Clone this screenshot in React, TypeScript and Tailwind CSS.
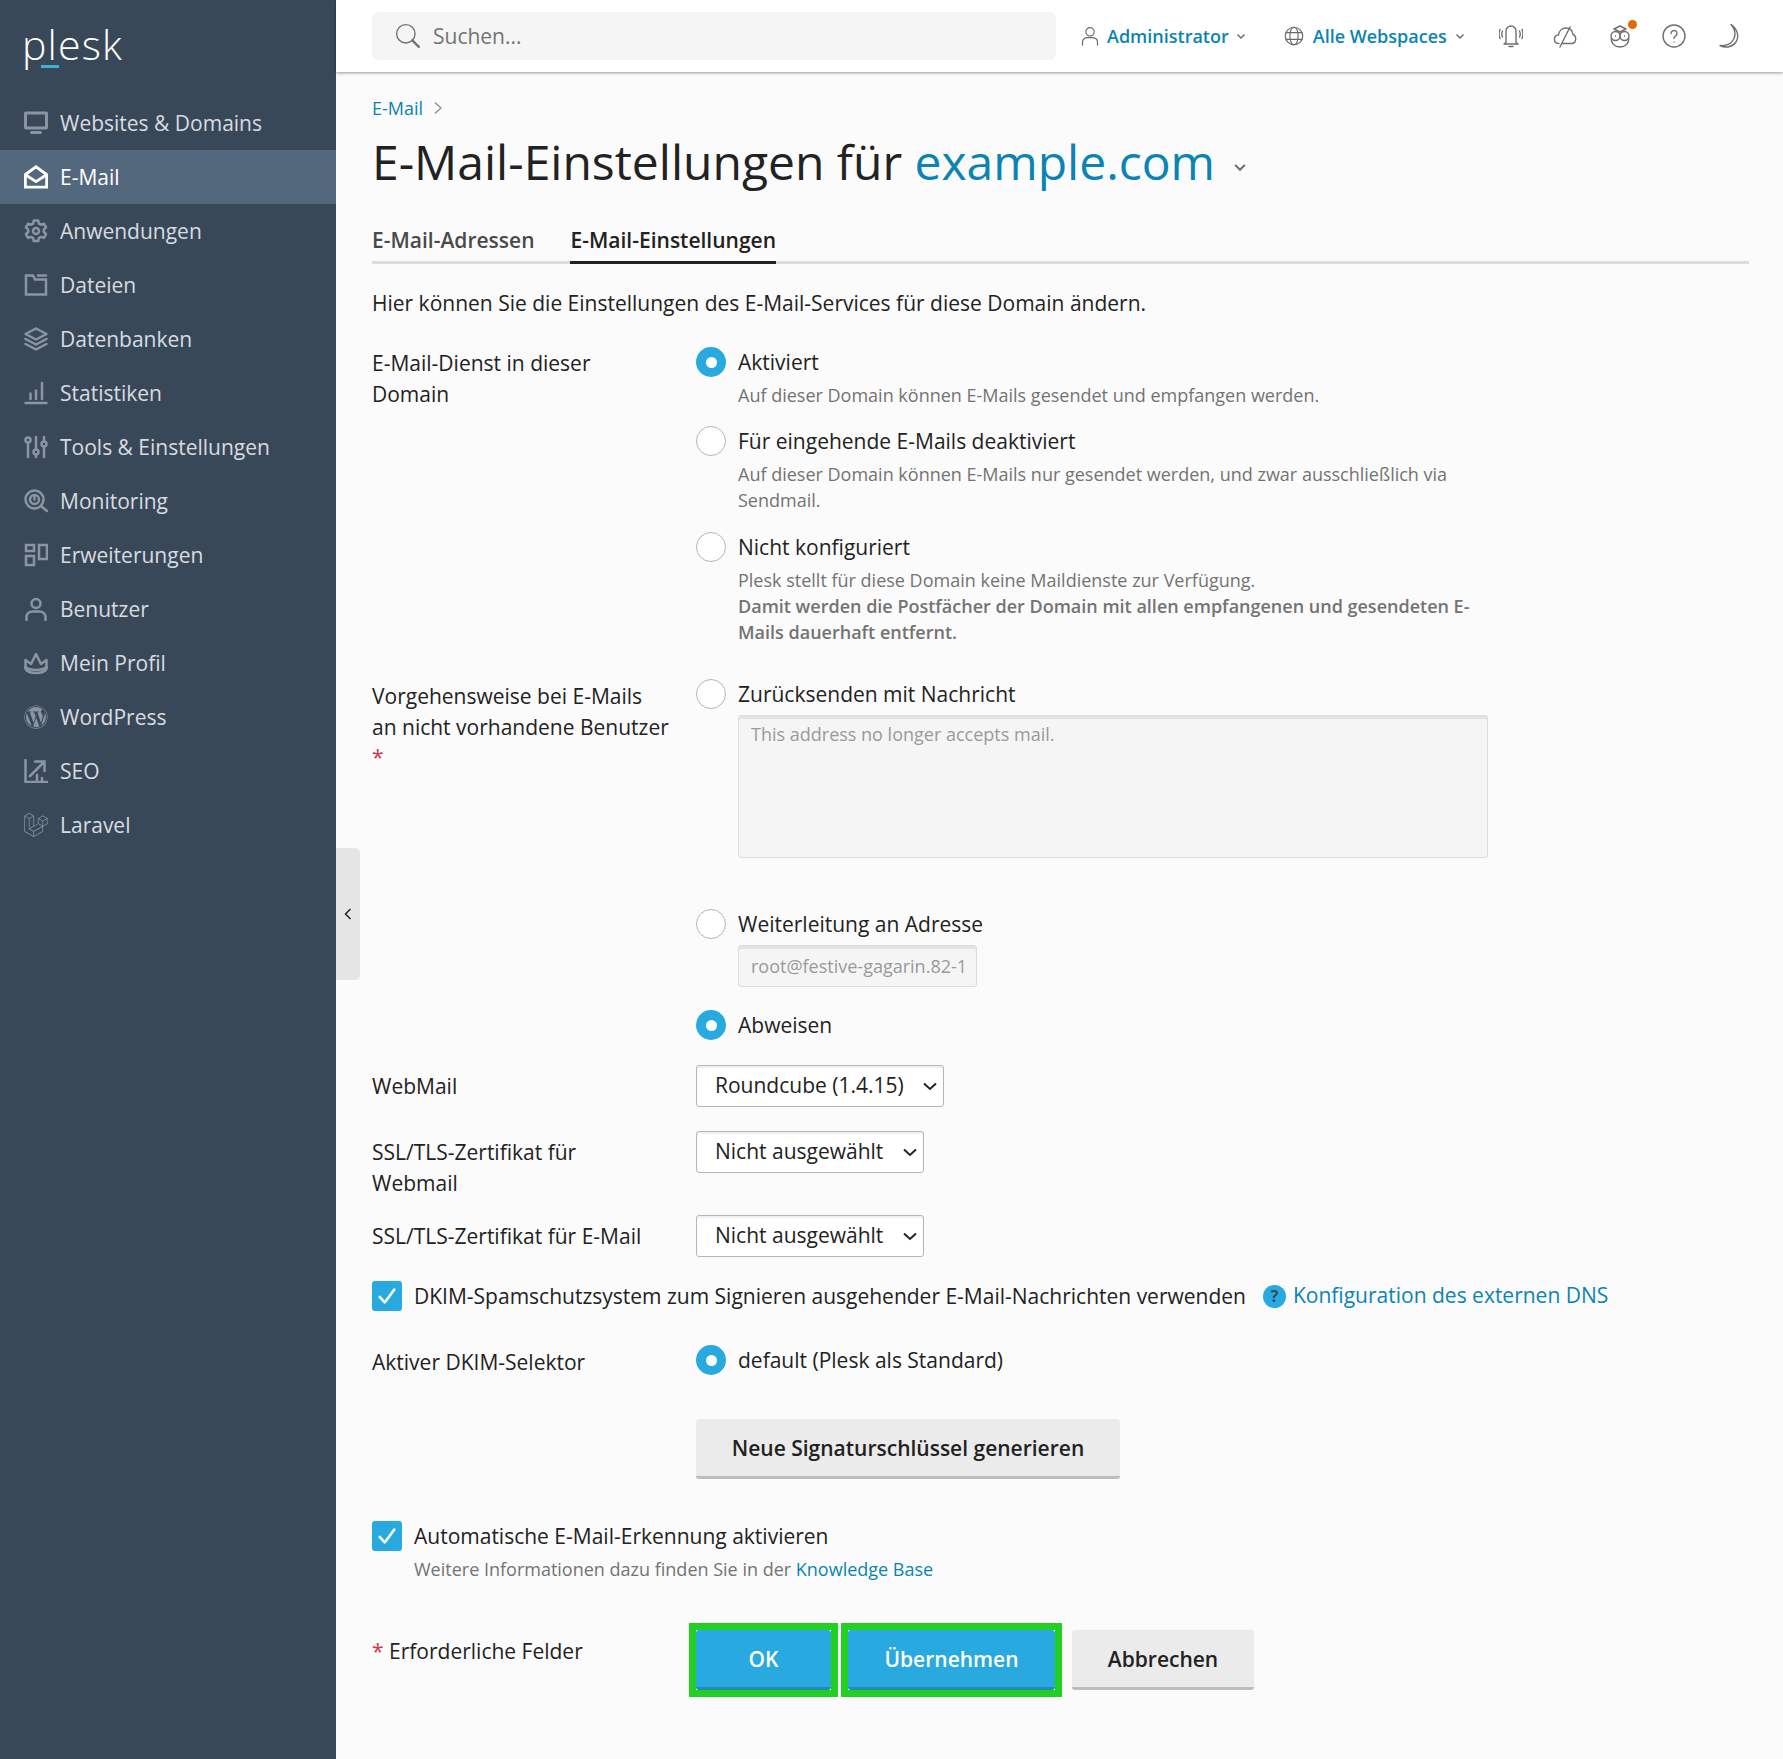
import { ReactNode } from "react";
import { FaWordpress } from "react-icons/fa";
import { SiLaravel } from "react-icons/si";

const Icon = ({ children, size = 24, sw = 2.5 }: { children: ReactNode; size?: number; sw?: number }) => (
  <svg
    width={size}
    height={size}
    viewBox="0 0 24 24"
    fill="none"
    stroke="currentColor"
    strokeWidth={sw}
    strokeLinecap="round"
    strokeLinejoin="round"
    className="shrink-0"
  >
    {children}
  </svg>
);

const navItems: { label: string; active?: boolean; icon: ReactNode }[] = [
  {
    label: "Websites & Domains",
    icon: (
      <Icon sw={3}>
        <rect x="1.5" y="2" width="21" height="15" rx="0.5" strokeLinecap="butt" />
        <path d="M7.5 21.500h9" />
      </Icon>
    ),
  },
  {
    label: "E-Mail",
    active: true,
    icon: (
      <Icon sw={2.8}>
        <path d="M1.400 9.500 12 1.800l10.600 7.700v12.600H1.400z" strokeLinejoin="miter" />
        <path d="M1.800 10l10.200 6.600L22.200 10" />
      </Icon>
    ),
  },
  {
    label: "Anwendungen",
    icon: (
      <Icon>
        <path d="M9.800 1.500h4.400l.7 3.100 2 1.100 3-1 2.200 3.800-2.300 2.100v2.400l2.300 2.100-2.200 3.800-3-1-2 1.100-.7 3.100H9.800l-.7-3.100-2-1.100-3 1-2.200-3.800 2.300-2.100v-2.400L1.900 8.500l2.200-3.800 3 1 2-1.100z" />
        <circle cx="12" cy="12" r="3" />
      </Icon>
    ),
  },
  {
    label: "Dateien",
    icon: (
      <Icon>
        <path d="M2 2.500v19h20V6.500H11l-2-4z" strokeLinejoin="miter" />
        <path d="M14 2.500h8" />
      </Icon>
    ),
  },
  {
    label: "Datenbanken",
    icon: (
      <Icon>
        <path d="M12 1.500 22.500 7 12 12.500 1.500 7z" />
        <path d="M1.500 12 12 17.500 22.500 12" />
        <path d="M1.500 17 12 22.500 22.500 17" />
      </Icon>
    ),
  },
  {
    label: "Statistiken",
    icon: (
      <Icon>
        <path d="M1.500 22h21" />
        <path d="M6.500 12.500v5.500M12 9.500v8.500M18 2v16" />
      </Icon>
    ),
  },
  {
    label: "Tools & Einstellungen",
    icon: (
      <Icon>
        <circle cx="4" cy="5" r="2.500" />
        <circle cx="12" cy="17" r="2.500" />
        <circle cx="20" cy="9" r="2.500" />
        <path d="M4 7.500V22M12 2v12.500M12 19.500V22M20 2v4.500M20 11.500V22" />
      </Icon>
    ),
  },
  {
    label: "Monitoring",
    icon: (
      <Icon>
        <circle cx="10.500" cy="10.500" r="9" />
        <circle cx="10.500" cy="10.500" r="4.500" />
        <path d="M10.500 7v3.500M17 17l6 5" />
      </Icon>
    ),
  },
  {
    label: "Erweiterungen",
    icon: (
      <Icon>
        <rect x="2" y="2" width="8" height="6" strokeLinejoin="miter" />
        <rect x="2" y="13" width="8" height="9" strokeLinejoin="miter" />
        <rect x="15" y="2" width="8" height="14" strokeLinejoin="miter" />
      </Icon>
    ),
  },
  {
    label: "Benutzer",
    icon: (
      <Icon>
        <circle cx="12" cy="6.500" r="4.500" />
        <path d="M2.500 23v-3.500c0-3 3-5 6-5h7c3 0 6 2 6 5V23" />
      </Icon>
    ),
  },
  {
    label: "Mein Profil",
    icon: (
      <Icon>
        <path d="M1.500 9 7 13l5-10 5 10 5.500-4v9c-2 3-6 4-10.500 4s-8.500-1-10.500-4z" />
        <path d="M1.500 16c3 2.500 7 3 10.500 3s7.500-.5 10.500-3" />
      </Icon>
    ),
  },
  { label: "WordPress", icon: <FaWordpress size={24} className="shrink-0" /> },
  {
    label: "SEO",
    icon: (
      <Icon>
        <path d="M1.500 1v22h22" strokeLinejoin="miter" />
        <path d="M6 17 20 3M11 2.500h9.500V12" strokeLinejoin="miter" />
        <path d="M13 22v-6M18 22v-3" />
      </Icon>
    ),
  },
  { label: "Laravel", icon: <SiLaravel size={24} className="shrink-0" /> },
];

const Sidebar = () => (
  <aside className="w-[336px] shrink-0 bg-[#394858]">
    <div className="relative h-[96px] pl-[22px] pt-[14px]">
      <span className="block text-[41px] leading-[60px] font-light tracking-[1.2px] text-white">plesk</span>
      <span className="absolute left-[41px] top-[65px] h-[3px] w-[18px] bg-[#3cb1d6]" />
    </div>
    <nav>
      {navItems.map((item) => (
        <div
          key={item.label}
          className={
            item.active
              ? "flex h-[54px] items-center gap-[12px] bg-[#53687c] pl-[24px] text-white"
              : "flex h-[54px] items-center gap-[12px] pl-[24px] text-[#d8dce0]"
          }
        >
          <span className={item.active ? "text-white" : "text-[#8a95a1]"}>{item.icon}</span>
          <span className="-mt-[1px] text-[21px] leading-[30px]">{item.label}</span>
        </div>
      ))}
    </nav>
  </aside>
);

const Chevron = ({ cls = "" }: { cls?: string }) => (
  <svg width="10" height="10" viewBox="0 0 10 10" fill="none" stroke="currentColor" strokeWidth="1.400" className={cls}>
    <path d="M1.500 3.500 5 7l3.500-3.500" />
  </svg>
);

const Header = () => (
  <header className="flex h-[72px] items-center bg-white pl-[36px] shadow-[0_1px_3px_rgba(0,0,0,0.4)]">
    <div className="flex h-[48px] w-[684px] items-center gap-[12px] rounded-[6px] bg-[#f5f5f5] pl-[23px] text-[#737373]">
      <Icon size={26} sw={1.3}>
        <circle cx="10" cy="10" r="8.500" />
        <path d="M16 16l6 6" strokeWidth="2.200" />
      </Icon>
      <span className="text-[21px] leading-[30px]">Suchen...</span>
    </div>
    <div className="ml-[24px] flex items-center gap-[7px] text-[#6b6b6b]">
      <Icon size={20} sw={1.4}>
        <circle cx="12" cy="7" r="5" />
        <path d="M3 23v-4c0-3 3-5 6-5h6c3 0 6 2 6 5v4" />
      </Icon>
      <span className="text-[18px] leading-[26px] font-semibold text-[#0a84b3]">Administrator</span>
      <Chevron />
    </div>
    <div className="ml-[38px] flex items-center gap-[9px] text-[#6b6b6b]">
      <Icon size={20} sw={1.4}>
        <circle cx="12" cy="12" r="10.500" />
        <ellipse cx="12" cy="12" rx="5" ry="10.500" />
        <path d="M2.500 8h19M2.500 16h19" />
      </Icon>
      <span className="text-[18px] leading-[26px] font-semibold text-[#0a84b3]">Alle Webspaces</span>
      <Chevron cls="-ml-[1px]" />
    </div>
    <div className="ml-[34px] flex items-center gap-[30.500px] text-[#6f6f6f]">
      <Icon sw={1.4}>
        <path d="M7 18.500V7a5 5 0 0 1 10 0v11.500l2 1.500H5z" />
        <path d="M10 22.500h4M3.500 7c-1 2-1 4 0 6M1 5.500c-1.300 3-1.300 6 0 9M20.500 7c1 2 1 4 0 6M23 5.500c1.300 3 1.300 6 0 9" />
      </Icon>
      <Icon sw={1.4}>
        <path d="M6 19.500c-6 0-6-8-.5-8.500C6 7 9 4 13 4c4 0 6.500 3 7 6.500 4 1.500 3.500 9-1.500 9H9" />
        <path d="M7 23 17 3" />
      </Icon>
      <span className="relative block">
        <Icon sw={1.4}>
          <path d="M6 5 12 2l6 3-6 3z" />
          <circle cx="7.500" cy="12" r="4.500" />
          <circle cx="16.500" cy="12" r="4.500" />
          <path d="M3.500 14c-1 5 3 9 8.500 9s9.500-4 8.500-9M7.500 12h.01M16.500 12h.01" />
        </Icon>
        <span className="absolute -top-[4px] -right-[5px] size-[9px] rounded-full bg-[#e06c00]" />
      </span>
      <Icon sw={1.4}>
        <circle cx="12" cy="12" r="11" />
        <path d="M9 9.500a3 3 0 1 1 4.500 2.600c-1 .6-1.500 1.200-1.500 2.400M12 18v.01" />
      </Icon>
      <Icon sw={1.4}>
        <path d="M14 .5c6.500 4.500 8.500 12 5 17.500-3.500 5-10 6.500-16 3.500 6 .5 11-1.500 13.500-6 2.500-5 1.500-10.500-2.500-15z" />
      </Icon>
    </div>
  </header>
);

const Radio = ({ checked }: { checked?: boolean }) =>
  checked ? (
    <span className="flex size-[30px] shrink-0 items-center justify-center rounded-full bg-[#28a9e0]">
      <span className="size-[11px] rounded-full bg-white" />
    </span>
  ) : (
    <span className="size-[30px] shrink-0 rounded-full border border-[#b5b5b5] bg-white" />
  );

const RadioLine = ({ checked, children }: { checked?: boolean; children: ReactNode }) => (
  <div className="flex items-center gap-[12px] text-[21px] leading-[30px] text-[#222222]">
    <Radio checked={checked} />
    <span>{children}</span>
  </div>
);

const Desc = ({ children }: { children: ReactNode }) => (
  <p className="mt-[5px] ml-[42px] w-[750px] text-[18px] leading-[26px] text-[#737373]">{children}</p>
);

const Checkbox = () => (
  <span className="flex size-[30px] shrink-0 items-center justify-center rounded-[3px] bg-[#28a9e0] text-white">
    <Icon size={22} sw={2.8}>
      <path d="M4 13l5.500 6L20 5" />
    </Icon>
  </span>
);

const Label = ({ children, cls = "" }: { children: ReactNode; cls?: string }) => (
  <div className={`w-[324px] shrink-0 text-[21px] leading-[30.600px] text-[#222222] ${cls}`}>{children}</div>
);

const Select = ({ value, cls }: { value: string; cls: string }) => (
  <div className={`relative ${cls}`}>
    <select
      defaultValue={value}
      className="h-[42px] w-full appearance-none rounded-[3px] border border-[#b5b5b5] bg-white pl-[18px] text-[21px] text-[#222222] shadow-[inset_0_2px_1px_rgba(0,0,0,0.06)]"
    >
      <option>{value}</option>
    </select>
    <svg
      width="14"
      height="9"
      viewBox="0 0 14 9"
      fill="none"
      stroke="#222222"
      strokeWidth="2"
      className="pointer-events-none absolute top-[17px] right-[7px]"
    >
      <path d="M1 1.500 7 7l6-5.500" />
    </svg>
  </div>
);

const Button = ({ children, primary, cls = "" }: { children: ReactNode; primary?: boolean; cls?: string }) => (
  <button
    className={
      primary
        ? `h-[60px] rounded-[3px] border-b-[3px] border-[#2289b8] bg-[#28a9e0] pt-[3px] text-[21px] font-semibold whitespace-nowrap text-white ${cls}`
        : `h-[60px] rounded-[3px] border-b-[3px] border-[#bdbdbd] bg-[#ebebeb] pt-[3px] text-[21px] font-semibold whitespace-nowrap text-[#222222] ${cls}`
    }
  >
    {children}
  </button>
);

const Form = () => (
  <div className="mt-[29px]">
    <div className="flex">
      <Label cls="pt-[1px]">
        E-Mail-Dienst in dieser
        <br />
        Domain
      </Label>
      <div>
        <RadioLine checked>Aktiviert</RadioLine>
        <Desc>Auf dieser Domain können E-Mails gesendet und empfangen werden.</Desc>
        <div className="mt-[18px]">
          <RadioLine>Für eingehende E-Mails deaktiviert</RadioLine>
        </div>
        <Desc>Auf dieser Domain können E-Mails nur gesendet werden, und zwar ausschließlich via Sendmail.</Desc>
        <div className="mt-[19px]">
          <RadioLine>Nicht konfiguriert</RadioLine>
        </div>
        <Desc>
          Plesk stellt für diese Domain keine Maildienste zur Verfügung.
          <br />
          <strong className="font-semibold">
            Damit werden die Postfächer der Domain mit allen empfangenen und gesendeten E-Mails dauerhaft entfernt.
          </strong>
        </Desc>
      </div>
    </div>

    <div className="mt-[34px] flex">
      <Label cls="pt-[2px]">
        Vorgehensweise bei E-Mails
        <br />
        an nicht vorhandene Benutzer
        <br />
        <span className="text-[#d0344e]">*</span>
      </Label>
      <div>
        <RadioLine>Zurücksenden mit Nachricht</RadioLine>
        <textarea
          disabled
          defaultValue="This address no longer accepts mail."
          className="mt-[6px] ml-[42px] block h-[143px] w-[750px] resize-none rounded-[3px] border border-[#dddddd] bg-[#f5f5f5] px-[12px] py-[4px] text-[18px] leading-[28px] text-[#9a9a9a] shadow-[inset_0_3px_1px_rgba(0,0,0,0.07)]"
        />
        <div className="mt-[51px]">
          <RadioLine>Weiterleitung an Adresse</RadioLine>
        </div>
        <input
          disabled
          defaultValue="root@festive-gagarin.82-1"
          className="mt-[6px] ml-[42px] block h-[42px] w-[239px] rounded-[3px] border border-[#dddddd] bg-[#f5f5f5] px-[12px] text-[18px] text-[#9a9a9a] shadow-[inset_0_3px_1px_rgba(0,0,0,0.07)]"
        />
        <div className="mt-[23px]">
          <RadioLine checked>Abweisen</RadioLine>
        </div>
      </div>
    </div>

    <div className="mt-[25px] flex">
      <Label cls="pt-[6px]">WebMail</Label>
      <Select value="Roundcube (1.4.15)" cls="w-[248px]" />
    </div>
    <div className="mt-[24px] flex">
      <Label cls="pt-[6px]">
        SSL/TLS-Zertifikat für
        <br />
        Webmail
      </Label>
      <Select value="Nicht ausgewählt" cls="w-[228px]" />
    </div>
    <div className="mt-[17px] flex">
      <Label cls="pt-[6px]">SSL/TLS-Zertifikat für E-Mail</Label>
      <Select value="Nicht ausgewählt" cls="w-[228px]" />
    </div>

    <div className="mt-[24px] flex items-center gap-[12px] text-[21px] leading-[30px] text-[#222222]">
      <Checkbox />
      <span>DKIM-Spamschutzsystem zum Signieren ausgehender E-Mail-Nachrichten verwenden</span>
      <span className="ml-[5px] flex size-[23px] items-center justify-center rounded-full bg-[#28a9e0] text-[16px] font-bold text-[#39455a]">
        ?
      </span>
      <span className="-ml-[5px] -mt-[2px] text-[#0a84b3]">Konfiguration des externen DNS</span>
    </div>

    <div className="mt-[32px] flex">
      <Label cls="pt-[4px]">Aktiver DKIM-Selektor</Label>
      <RadioLine checked>default (Plesk als Standard)</RadioLine>
    </div>

    <div className="mt-[41px] pl-[324px]">
      <Button cls="w-[424px]">Neue Signaturschlüssel generieren</Button>
    </div>

    <div className="mt-[42px] flex items-center gap-[12px] text-[21px] leading-[30px] text-[#222222]">
      <Checkbox />
      <span>Automatische E-Mail-Erkennung aktivieren</span>
    </div>
    <p className="mt-[5px] ml-[42px] text-[18px] leading-[26px] text-[#737373]">
      Weitere Informationen dazu finden Sie in der <span className="text-[#0a84b3]">Knowledge Base</span>
    </p>

    <div className="mt-[48px] flex">
      <Label cls="pt-[6px]">
        <span className="text-[#d0344e]">*</span> Erforderliche Felder
      </Label>
      <div className="flex gap-[17px]">
        <div className="bg-white outline-[7px] outline-[#23cf23]">
          <Button primary cls="block w-[135px]">OK</Button>
        </div>
        <div className="bg-white outline-[7px] outline-[#23cf23]">
          <Button primary cls="block w-[207px]">Übernehmen</Button>
        </div>
        <Button cls="w-[182px]">Abbrechen</Button>
      </div>
    </div>
  </div>
);

export default function App() {
  return (
    <div className="flex min-h-[1759px] font-['Open_Sans',sans-serif]">
      <Sidebar />
      <main className="relative flex-1 bg-[#fbfbfb]">
        <Header />
        <button className="absolute top-[848px] left-0 flex h-[132px] w-[24px] items-center justify-center rounded-r-[5px] bg-[#e5e5e5] text-[#222222]">
          <svg width="10" height="14" viewBox="0 0 10 14" fill="none" stroke="currentColor" strokeWidth="1.500">
            <path d="M7.500 2 2.500 7l5 5" />
          </svg>
        </button>
        <div className="pr-[34px] pl-[36px]">
          <div className="flex items-center gap-[10px] pt-[23px] text-[18px] leading-[26px] text-[#0a84b3]">
            E-Mail
            <svg width="10" height="16" viewBox="0 0 10 16" fill="none" stroke="#8a8a8a" strokeWidth="1.200">
              <path d="M2 2.500 8 8l-6 5.500" />
            </svg>
          </div>
          <h1 className="mt-[9px] flex items-center text-[48px] leading-[64px] text-[#222222]">
            E-Mail-Einstellungen für&nbsp;<span className="text-[#0a84b3]">example.com</span>
            <Chevron cls="mt-[10px] ml-[18px] size-[14px] text-[#6b6b6b]" />
          </h1>
          <div className="mt-[17px] flex h-[53px] gap-[36px] border-b-[3px] border-[#dddddd] text-[21px] font-semibold">
            <div className="pt-[14px] leading-[30px] text-[#4a4a4a]">E-Mail-Adressen</div>
            <div className="-mb-[3px] border-b-[3px] border-[#222222] pt-[14px] leading-[30px] text-[#222222]">
              E-Mail-Einstellungen
            </div>
          </div>
          <p className="mt-[24px] text-[21px] leading-[30px] text-[#222222]">
            Hier können Sie die Einstellungen des E-Mail-Services für diese Domain ändern.
          </p>
          <Form />
        </div>
      </main>
    </div>
  );
}
